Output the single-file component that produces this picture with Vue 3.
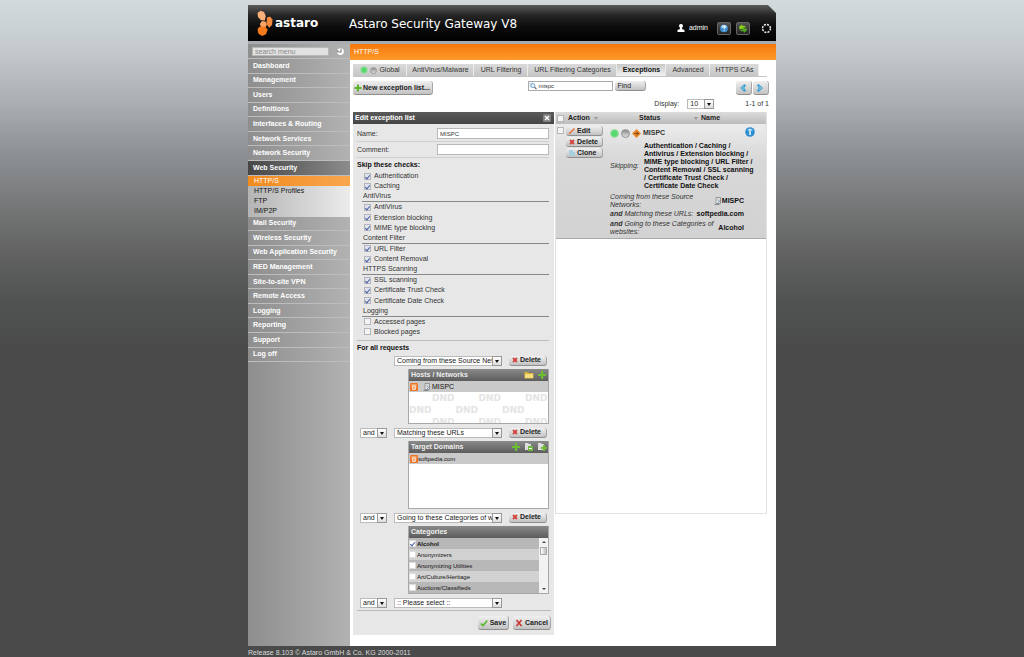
<script setup>
import { ref } from 'vue'

const menuTop = ['Dashboard', 'Management', 'Users', 'Definitions', 'Interfaces & Routing', 'Network Services', 'Network Security']
const subMenu = ['HTTP/S', 'HTTP/S Profiles', 'FTP', 'IM/P2P']
const menuBottom = ['Mail Security', 'Wireless Security', 'Web Application Security', 'RED Management', 'Site-to-site VPN', 'Remote Access', 'Logging', 'Reporting', 'Support', 'Log off']
const tabs = ['Global', 'AntiVirus/Malware', 'URL Filtering', 'URL Filtering Categories', 'Exceptions', 'Advanced', 'HTTPS CAs']
const skipped = ['Authentication / Caching /', 'Antivirus / Extension blocking /', 'MIME type blocking / URL Filter /', 'Content Removal / SSL scanning', '/ Certificate Trust Check /', 'Certificate Date Check']

const checks = ref([
  { label: 'Authentication', on: true },
  { label: 'Caching', on: true },
  { heading: 'AntiVirus' },
  { label: 'AntiVirus', on: true },
  { label: 'Extension blocking', on: true },
  { label: 'MIME type blocking', on: true },
  { heading: 'Content Filter' },
  { label: 'URL Filter', on: true },
  { label: 'Content Removal', on: true },
  { heading: 'HTTPS Scanning' },
  { label: 'SSL scanning', on: true },
  { label: 'Certificate Trust Check', on: true },
  { label: 'Certificate Date Check', on: true },
  { heading: 'Logging' },
  { label: 'Accessed pages', on: false },
  { label: 'Blocked pages', on: false },
])
const categories = ref([
  { label: 'Alcohol', on: true },
  { label: 'Anonymizers', on: false },
  { label: 'Anonymizing Utilities', on: false },
  { label: 'Art/Culture/Heritage', on: false },
  { label: 'Auctions/Classifieds', on: false },
])
const search = ref('mispc')
const name = ref('MISPC')
const comment = ref('')
</script>

<template>
  <div class="page">
    <div class="shell">
      <header class="top">
        <svg class="mark" viewBox="0 0 17 26" aria-hidden="true">
          <path d="M1.500 3 4.500.8 8 2l1.800 4-1 4.500L5 10.200 2 7z" fill="#fbb07a" />
          <path d="M11 7.500 14 6.500l2.500 3-.4 5.500-3 2.800-2.600-3.800z" fill="#f58a3c" />
          <path d="m6 11 4 .8.800 3.200-1.200 2.500-4.600-.5L3.800 14z" fill="#f9a465" />
          <path d="m3.500 16.800 5.500-.3 2.700 3-1.700 4.700L6 26l-3.700-2.500L1.500 19z" fill="#f57a1c" />
        </svg>
        <span class="brand">astaro</span>
        <h1>Astaro Security Gateway V8</h1>
        <div class="user">
          <svg class="person" viewBox="0 0 8 8" aria-hidden="true"><path d="M4 0a2 2 0 0 1 1.200 3.600L5 5l2.500 1v2h-7V6L3 5 2.800 3.600A2 2 0 0 1 4 0z" fill="#fff" /></svg>
          <span>admin</span>
        </div>
        <button class="tool" aria-label="Help">
          <svg viewBox="0 0 12 12"><circle cx="6" cy="6" r="4.200" fill="#3f8ed0" /><path d="M2.500 4.500a3.700 3.700 0 0 1 7 0L6 5.600z" fill="#a9d6f5" /><path d="M4.700 4.700a1.300 1.300 0 1 1 1.600 1.500V7M6.200 8v.9" fill="none" stroke="#fff" stroke-width="1" /></svg>
        </button>
        <button class="tool" aria-label="Reload">
          <svg viewBox="0 0 12 12"><path d="M1.500 4.500 4.500 1.500l1 1.500c2.500-.3 3.500.6 4 2-1.600-.6-2.300-.6-3 0L7.500 6.500l-5 .2z" fill="#8ad01c" /><path d="m10.500 7.500-3 3-1-1.400c-2.500.2-3.500-.6-4-2 1.600.6 2.600.6 3.200 0L5 5.800l4.700-.1z" fill="#4fa81a" /></svg>
        </button>
        <svg class="ring" viewBox="0 0 12 12" aria-hidden="true"><circle cx="6" cy="6" r="4.300" fill="none" stroke="#eee" stroke-width="1.600" stroke-dasharray="2.200 1.180" /></svg>
      </header>

      <div class="body">
        <aside class="side">
          <div class="menu-search">
            <input type="text" placeholder="search menu" aria-label="Search menu" />
            <button aria-label="Reset search"><svg viewBox="0 0 8 8"><circle cx="4" cy="4" r="3" fill="#fff" /><path d="M4.500 1.500v3H2M2 3l-1 1.500" fill="none" stroke="#777" stroke-width=".9" /></svg></button>
          </div>
          <nav class="menu">
            <a v-for="m in menuTop" :key="m" href="#">{{ m }}</a>
            <a href="#" class="open">Web Security</a>
            <div class="sub">
              <a v-for="(s, i) in subMenu" :key="s" href="#" :class="{ active: i === 0 }">{{ s }}</a>
            </div>
            <a v-for="m in menuBottom" :key="m" href="#">{{ m }}</a>
          </nav>
        </aside>

        <main class="main">
          <div class="crumb">HTTP/S</div>
          <div class="content">
            <nav class="tabs">
              <a v-for="(t, i) in tabs" :key="t" href="#" :class="['t' + i, { current: t === 'Exceptions' }]">
                <template v-if="i === 0"><i class="dot green"></i><i class="dot"></i></template>{{ t }}
              </a>
            </nav>

            <div class="toolbar">
              <button class="btn new"><svg class="ic" viewBox="0 0 8 8"><path d="M3 .5h2V3h2.500v2H5v2.500H3V5H.5V3H3z" fill="#5cb52a" /></svg>New exception list...</button>
              <div class="find">
                <div class="searchbox">
                  <svg class="ic" viewBox="0 0 8 8"><path d="M.5.500h4v5h-4z" fill="#cfe0ee" /><circle cx="4" cy="3.600" r="2" fill="#e4f1fb" stroke="#7aa0bf" stroke-width=".9" /><path d="m5.500 5.200 2 2" stroke="#666" stroke-width="1.200" /></svg>
                  <input v-model="search" type="text" aria-label="Search" />
                </div>
                <button class="btn findbtn">Find</button>
              </div>
              <div class="pager">
                <button class="btn" aria-label="Previous"><svg viewBox="0 0 10 10"><path d="M6.500 0 9 1.500 6.500 5 9 8.500 6.500 10 1.500 5z" fill="#3f9fd0" /><path d="M6 2.500 4 5l2 2.500" fill="none" stroke="#a8dcf2" /></svg></button>
                <button class="btn" aria-label="Next"><svg viewBox="0 0 10 10"><path d="M3.500 0 1 1.500 3.500 5 1 8.500 3.500 10l5-5z" fill="#3f9fd0" /><path d="m4 2.500 2 2.500-2 2.500" fill="none" stroke="#a8dcf2" /></svg></button>
              </div>
            </div>

            <div class="display">
              <label for="per">Display:</label>
              <div class="sel per"><select id="per"><option>10</option></select></div>
              <span class="count">1-1 of 1</span>
            </div>

            <div class="cols">
              <form class="edit" @submit.prevent>
                <div class="edit-head"><span>Edit exception list</span><button type="button" aria-label="Close"><svg viewBox="0 0 8 8"><rect width="8" height="8" rx="1" fill="#808080" /><path d="m2 2 4 4M6 2 2 6" stroke="#fff" stroke-width="1.300" /></svg></button></div>
                <div class="edit-body">
                  <div class="field"><label for="nm">Name:</label><input id="nm" v-model="name" type="text" /></div>
                  <div class="field"><label for="cm">Comment:</label><input id="cm" v-model="comment" type="text" /></div>
                  <h2>Skip these checks:</h2>
                  <div class="checks">
                    <template v-for="(c, i) in checks" :key="i">
                      <div v-if="c.heading" class="group">{{ c.heading }}</div>
                      <label v-else class="check"><input v-model="c.on" type="checkbox" />{{ c.label }}</label>
                    </template>
                  </div>
                  <h2 class="requests">For all requests</h2>

                  <div class="cond first">
                    <div class="sel wide"><select aria-label="Condition 1"><option>Coming from these Source Networks</option></select></div>
                    <button type="button" class="btn del"><svg class="ic" viewBox="0 0 8 8"><path d="m2 2 4 4m0-4L2 6" stroke="#d0443c" stroke-width="1.800" /></svg>Delete</button>
                  </div>
                  <section class="box hosts">
                    <h3>Hosts / Networks
                      <span class="acts">
                        <svg viewBox="0 0 10 10"><path d="M.5 2h3.500l1 1h4.500v5.500h-9z" fill="#d9b23c" /><path d="M1 4h8v4H1z" fill="#f5dc7c" /></svg>
                        <svg viewBox="0 0 10 10"><path d="M4 1h2.200v3H9v2H6.200v3H4V6H1V4h3z" fill="#6cc030" /></svg>
                      </span>
                    </h3>
                    <div class="item">
                      <svg class="trash" viewBox="0 0 8 8"><rect width="8" height="8" rx="1" fill="#ee7527" /><path d="M1.500 2h5M2.200 3l.4 3.500h2.800L5.800 3z" fill="#f6a878" stroke="#fff" stroke-width=".7" /></svg>
                      <svg class="host" viewBox="0 0 8 8"><path d="M2 .5h4.500v6H2z" fill="#f4f4f4" stroke="#777" stroke-width=".7" /><path d="M3 2h2.500M3 3.300h2.500" stroke="#789" stroke-width=".6" /><path d="m3.500 6 3-2.500" stroke="#6a7ab0" /><path d="M.5 7.500h5" stroke="#777" stroke-width=".8" /></svg>
                      MISPC
                    </div>
                    <div class="drop" aria-hidden="true">
                      <div><span>DND</span><span>DND</span><span>DND</span></div>
                      <div><span>DND</span><span>DND</span><span>DND</span></div>
                      <div><span>DND</span><span>DND</span><span>DND</span></div>
                    </div>
                  </section>

                  <div class="cond">
                    <div class="sel and"><select aria-label="Operator 2"><option>and</option></select></div>
                    <div class="sel wide"><select aria-label="Condition 2"><option>Matching these URLs</option></select></div>
                    <button type="button" class="btn del"><svg class="ic" viewBox="0 0 8 8"><path d="m2 2 4 4m0-4L2 6" stroke="#d0443c" stroke-width="1.800" /></svg>Delete</button>
                  </div>
                  <section class="box domains">
                    <h3>Target Domains
                      <span class="acts">
                        <svg viewBox="0 0 10 10"><path d="M4 1h2.200v3H9v2H6.200v3H4V6H1V4h3z" fill="#6cc030" /></svg>
                        <svg viewBox="0 0 10 10"><path d="M1 1h3l1 1h2v6H1z" fill="#ddd" /><path d="M4 4h5v5H4z" fill="#6cb83a" /><path d="M5 6.500h3" stroke="#fff" /></svg>
                        <svg viewBox="0 0 10 10"><path d="M1 1h3l1 1h2v6H1z" fill="#ddd" /><path d="M4 5h2V3h2v2h2v2H8v2H6V7H4z" fill="#6cc030" /></svg>
                      </span>
                    </h3>
                    <div class="item small">
                      <svg class="trash" viewBox="0 0 8 8"><rect width="8" height="8" rx="1" fill="#ee7527" /><path d="M1.500 2h5M2.200 3l.4 3.500h2.800L5.800 3z" fill="#f6a878" stroke="#fff" stroke-width=".7" /></svg>
                      softpedia.com
                    </div>
                  </section>

                  <div class="cond">
                    <div class="sel and"><select aria-label="Operator 3"><option>and</option></select></div>
                    <div class="sel wide"><select aria-label="Condition 3"><option>Going to these Categories of websites</option></select></div>
                    <button type="button" class="btn del"><svg class="ic" viewBox="0 0 8 8"><path d="m2 2 4 4m0-4L2 6" stroke="#d0443c" stroke-width="1.800" /></svg>Delete</button>
                  </div>
                  <section class="box cats">
                    <h3>Categories</h3>
                    <div class="cat-wrap">
                      <div class="cat-list">
                        <label v-for="c in categories" :key="c.label" :class="{ on: c.on }"><input v-model="c.on" type="checkbox" />{{ c.label }}</label>
                      </div>
                      <div class="scroll" aria-hidden="true"><i class="up"></i><b></b><i class="down"></i></div>
                    </div>
                  </section>

                  <div class="cond">
                    <div class="sel and"><select aria-label="Operator 4"><option>and</option></select></div>
                    <div class="sel wide"><select aria-label="Condition 4"><option>:: Please select ::</option></select></div>
                  </div>
                  <div class="submit">
                    <button class="btn"><svg class="ic" viewBox="0 0 8 8"><path d="m.8 4.500 2.200 2L7.300 1.500" fill="none" stroke="#5cb52a" stroke-width="1.600" /></svg>Save</button>
                    <button type="button" class="btn"><svg class="ic" viewBox="0 0 8 8"><path d="m1.500 1 5 6m0-6-5 6" stroke="#c8372f" stroke-width="1.600" /></svg>Cancel</button>
                  </div>
                </div>
              </form>

              <div class="results">
                <table>
                  <thead>
                    <tr>
                      <th class="c-box"><input type="checkbox" aria-label="Select all" /></th>
                      <th class="c-act">Action <i class="sort"></i></th>
                      <th class="c-status">Status <i class="sort left"></i></th>
                      <th>Name</th>
                    </tr>
                  </thead>
                  <tbody>
                    <tr>
                      <td><input type="checkbox" aria-label="Select MISPC" /></td>
                      <td class="c-btns">
                        <button class="btn"><svg class="ic" viewBox="0 0 8 8"><path d="M1 7 6.500 1.500" stroke="#e8764a" stroke-width="1.600" /></svg>Edit</button>
                        <button class="btn"><svg class="ic" viewBox="0 0 8 8"><path d="m2 2 4 4m0-4L2 6" stroke="#d0443c" stroke-width="1.800" /></svg>Delete</button>
                        <button class="btn"><svg class="ic" viewBox="0 0 8 8"><path d="M1 1h4v5H1zM3 3h4v4H3z" fill="#a9cfe3" /></svg>Clone</button>
                      </td>
                      <td colspan="2" class="c-detail">
                        <div class="title">
                          <i class="dot green"></i><i class="dot"></i>
                          <svg class="diamond" viewBox="0 0 10 10"><path d="m5 0 5 5-5 5-5-5z" fill="#e8862a" /><path d="M2.500 5h4.500M5.200 3.200 7 5 5.200 6.800" fill="none" stroke="#7a4010" stroke-width="1" /></svg>
                          <b>MISPC</b>
                          <svg class="info" viewBox="0 0 10 10"><circle cx="5" cy="5" r="4.800" fill="#2d8fd2" /><path d="M2 3a3.600 3.600 0 0 1 6 0L5 5z" fill="#8fc9ee" /><path d="M5 4.200v3.800M5 2v1.300" stroke="#fff" stroke-width="1.400" /></svg>
                        </div>
                        <dl>
                          <div class="pair skip"><dt>Skipping:</dt><dd><span v-for="s in skipped" :key="s">{{ s }}</span></dd></div>
                          <div class="pair"><dt>Coming from these Source<br />Networks:</dt><dd><svg class="host" viewBox="0 0 8 8"><path d="M2 .5h4.500v6H2z" fill="#f4f4f4" stroke="#777" stroke-width=".7" /><path d="M3 2h2.500M3 3.300h2.500" stroke="#789" stroke-width=".6" /><path d="m3.500 6 3-2.500" stroke="#6a7ab0" /><path d="M.5 7.500h5" stroke="#777" stroke-width=".8" /></svg>MISPC</dd></div>
                          <div class="pair one"><dt><b>and</b> Matching these URLs:</dt><dd>softpedia.com</dd></div>
                          <div class="pair"><dt><b>and</b> Going to these Categories of<br />websites:</dt><dd>Alcohol</dd></div>
                        </dl>
                      </td>
                    </tr>
                  </tbody>
                </table>
              </div>
            </div>
          </div>
        </main>
      </div>
      <footer>Release 8.103 © Astaro GmbH &amp; Co. KG 2000-2011</footer>
    </div>
  </div>
</template>

<style>
body {
  background: #4a4a4a;
}
</style>

<style scoped>
*, *::before, *::after {
  box-sizing: border-box;
}
.page {
  min-height: 100vh;
  display: flex;
  justify-content: center;
  padding-top: 5px;
  background: linear-gradient(#d3dadd 0, #c4cacc 50px, #acb0b3 100px, #8f9396 150px, #787a7b 200px, #626362 250px, #515353 300px, #4a4a4a 350px);
  font: 7px/10px "Liberation Sans", Arial, sans-serif;
  color: #333;
}
.shell {
  width: 100%;
  max-width: 528px;
  display: flex;
  flex-direction: column;
}
input, select, button {
  font: inherit;
  color: inherit;
  margin: 0;
  padding: 0;
  min-width: 0;
}
button {
  border: 0;
  background: none;
}
a {
  color: inherit;
  text-decoration: none;
}
svg {
  display: block;
  flex: none;
}
h1, h2, h3, dl, dd {
  margin: 0;
}
input[type="text"] {
  border: 1px solid #b8b8b8;
  background: #fff;
}
input[type="checkbox"] {
  appearance: none;
  flex: none;
  display: grid;
  place-items: center;
  width: 7px;
  height: 7px;
  border: 1px solid #b4b6ba;
  background: #f4f4f6;
}
input[type="checkbox"]:checked {
  background: #dfe2ef;
}
input[type="checkbox"]:checked::before {
  content: "";
  width: 3px;
  height: 5px;
  border: solid #4a5fa0;
  border-width: 0 1px 1px 0;
  transform: rotate(40deg);
}

.top {
  display: flex;
  align-items: center;
  height: 36px;
  padding: 0 4px 0 8px;
  background: linear-gradient(#5c5c5c, #262626 10px, #0c0c0c 22px, #000);
  color: #fff;
  clip-path: polygon(0 0, calc(100% - 8px) 0, 100% 8px, 100% 100%, 0 100%);
}
.mark {
  width: 17px;
  height: 26px;
}
.brand {
  width: 76px;
  padding-left: 2px;
  font: bold 12px/16px "DejaVu Sans", sans-serif;
}
h1 {
  flex: 1;
  padding-top: 2px;
  font: 12px/16px "DejaVu Sans", sans-serif;
}
.user {
  display: flex;
  align-items: center;
  gap: 4px;
  padding: 10px 9px 0 0;
}
.person {
  width: 8px;
  height: 8px;
}
.tool {
  width: 14px;
  height: 13px;
  margin: 10px 5px 0 0;
  border: 1px solid #666;
  border-radius: 2px;
  background: linear-gradient(#555, #222);
}
.tool svg {
  width: 12px;
  height: 11px;
}
.ring {
  width: 11px;
  height: 11px;
  margin: 10px 0 0 6px;
}

.body {
  flex: 1;
  display: flex;
  border-top: 3px solid #a8abb0;
}
.side {
  flex: none;
  width: 102px;
  background: linear-gradient(90deg, #8e8e8e, #b2b2b2);
}
.menu-search {
  display: flex;
  justify-content: space-between;
  height: 15px;
  padding: 3px 5px 2px 4px;
  border-bottom: 1px solid #bdbdbd;
}
.menu-search input {
  width: 77px;
  padding: 0 2px;
  background: #e2e2e2;
}
.menu-search input::placeholder {
  color: #8a8a8a;
  opacity: 1;
}
.menu-search svg {
  width: 9px;
  height: 9px;
}
.menu {
  display: flex;
  flex-direction: column;
  height: 303px;
  color: #fff;
  font-weight: bold;
}
.menu > a {
  flex: 1;
  display: flex;
  align-items: center;
  padding-left: 5px;
  border-bottom: 1px solid #bdbdbd;
}
.menu > .open {
  background: linear-gradient(90deg, #464646, #8c8c8c);
}
.sub {
  padding-bottom: 1px;
  background: linear-gradient(90deg, #b4b4b4, #ececec);
  color: #111;
  font-weight: normal;
}
.sub a {
  display: block;
  padding-left: 6px;
  line-height: 10px;
}
.sub .active {
  background: linear-gradient(90deg, #f08a1c, #f9a650);
  color: #fff;
}

.main {
  flex: 1;
  min-width: 0;
  background: #fff;
}
.crumb {
  padding: 0 4px;
  line-height: 16px;
  color: #fff;
  background: linear-gradient(#f5780c, #ff9a2a);
}
.content {
  padding: 4px 9px 11px 3px;
}
.tabs {
  display: flex;
  height: 13px;
  border-bottom: 1px solid #c4c4c4;
}
.tabs a {
  display: flex;
  align-items: center;
  justify-content: center;
  white-space: nowrap;
  background: linear-gradient(#dadada, #c6c6c6);
  box-shadow: inset -1px 0 #ececec;
}
.t0 { width: 54px; gap: 2px; }
.t1 { width: 67px; }
.t2 { width: 54px; }
.t3 { width: 89px; }
.t4 { width: 49px; }
.t5 { width: 44px; }
.t6 { width: 49px; }
.tabs .current {
  background: linear-gradient(#c8c8c8, #f2f2f2);
  font-weight: bold;
  color: #111;
}
.dot {
  flex: none;
  width: 7px;
  height: 7px;
  border: 1px solid #9a9a9a;
  border-radius: 50%;
  background: linear-gradient(#8a8a8a, #e0e0e0);
}
.dot.green {
  width: 8px;
  height: 8px;
  border-color: #a8dcae;
  background: radial-gradient(#4fd764, #6fdc80);
}
.btn {
  display: flex;
  align-items: center;
  border-radius: 3px;
  background: linear-gradient(#f0f0f0, #c2c2c2);
  border-bottom: 1px solid #8f8f8f;
  border-right: 1px solid #a5a5a5;
  font-weight: bold;
  color: #222;
  white-space: nowrap;
}
.ic {
  width: 8px;
  height: 8px;
}
.toolbar {
  display: flex;
  align-items: flex-start;
  justify-content: space-between;
  padding-top: 4px;
}
.new {
  height: 14px;
  padding: 0 2px 0 1px;
  gap: 1px;
}
.find {
  display: flex;
  gap: 2px;
  padding-left: 6px;
}
.searchbox {
  display: flex;
  align-items: center;
  width: 85px;
  height: 10px;
  border: 1px solid #aaa;
}
.searchbox input {
  flex: 1;
  border: 0;
  height: 8px;
  font-size: 6px;
  padding-left: 1px;
}
.findbtn {
  width: 31px;
  height: 10px;
  padding-left: 2px;
  font-weight: normal;
}
.pager {
  display: flex;
  gap: 1px;
  margin-right: -2px;
}
.pager .btn {
  width: 16px;
  height: 14px;
  justify-content: center;
}
.pager svg {
  width: 8px;
  height: 8px;
}
.display {
  display: flex;
  align-items: center;
  justify-content: flex-end;
  height: 17px;
  margin-right: -2px;
}
.sel {
  position: relative;
  flex: none;
  height: 10px;
}
.sel select {
  display: block;
  appearance: none;
  width: 100%;
  height: 100%;
  padding: 0 9px 0 2px;
  border: 1px solid #bbb;
  border-radius: 0;
  background: #fff;
  line-height: 8px;
  overflow: hidden;
  color: #222;
}
.sel::before, .sel::after {
  content: "";
  position: absolute;
  pointer-events: none;
}
.sel::before {
  top: 0;
  right: 0;
  width: 10px;
  height: 100%;
  border: 1px solid #999;
  background: linear-gradient(#fff, #ddd);
}
.sel::after {
  top: 4px;
  right: 3px;
  border: 2px solid transparent;
  border-top: 3px solid #111;
  border-bottom: 0;
}
.per {
  width: 27px;
  margin: 0 31px 0 8px;
}

.cols {
  display: flex;
  align-items: flex-start;
  gap: 1px;
}
.edit {
  flex: none;
  width: 201px;
  background: #e7e7e7;
}
.edit-head {
  display: flex;
  align-items: center;
  justify-content: space-between;
  height: 12px;
  padding: 0 3px 0 2px;
  background: linear-gradient(#5a5a5a, #454545);
  color: #fff;
  font-weight: bold;
}
.edit-head svg {
  width: 8px;
  height: 8px;
}
.edit-body {
  padding: 2px 5px 5px 4px;
}
.field {
  display: flex;
  align-items: center;
  justify-content: space-between;
  height: 16px;
  border-bottom: 1px solid #cfcfcf;
}
.field input {
  width: 112px;
  height: 11px;
  padding-left: 2px;
  font-size: 6px;
}
h2 {
  font-size: 7px;
  line-height: 13px;
  color: #111;
}
.checks {
  display: grid;
  grid-auto-rows: 1fr;
  height: 166px;
  padding-left: 5px;
}
.check {
  display: flex;
  align-items: center;
  gap: 3px;
  padding-left: 2px;
}
.group {
  padding-left: 1px;
  border-bottom: 1px solid #888;
}
.requests {
  margin-top: 3px;
  line-height: 12px;
  padding-top: 1px;
  border-top: 1px solid #bbb;
}
.cond {
  display: flex;
  align-items: center;
  gap: 7px;
  height: 13px;
  padding-left: 3px;
}
.first {
  padding-left: 37px;
}
.wide {
  width: 108px;
}
.and {
  width: 27px;
}
.del {
  width: 38px;
  height: 10px;
  padding-left: 2px;
  gap: 1px;
}
.box {
  width: 141px;
  margin: 2px 0 2px auto;
  border: 1px solid #a8a8a8;
  border-top: 0;
  background: #fff;
  overflow: hidden;
}
h3 {
  display: flex;
  justify-content: space-between;
  align-items: center;
  height: 12px;
  margin: 0 -1px;
  padding: 0 2px 0 3px;
  font-size: 7px;
  color: #eee;
  background: linear-gradient(#8a8a8a, #5c5c5c);
}
.acts {
  display: flex;
  gap: 3px;
}
.acts svg {
  width: 10px;
  height: 10px;
}
.item {
  display: flex;
  align-items: center;
  height: 11px;
  padding-left: 1px;
  background: #c9c9c9;
  color: #111;
}
.trash, .host {
  width: 8px;
  height: 8px;
}
.item .host {
  margin: 0 1px 0 5px;
}
.small {
  font-size: 6px;
}
.hosts {
  height: 55px;
}
.domains {
  height: 68px;
}
.drop {
  color: #e4e4e4;
  font: bold 9px/12px "DejaVu Sans", sans-serif;
}
.drop div {
  display: flex;
  gap: 24px;
  padding-left: 23px;
}
.drop div:nth-child(2) {
  padding-left: 0;
}
.cat-wrap {
  display: flex;
}
.cat-list {
  flex: 1;
  font-size: 6px;
  color: #111;
}
.cat-list label {
  display: flex;
  align-items: center;
  gap: 1px;
  height: 11px;
  background: #d2d2d2;
}
.cat-list label:nth-child(odd) {
  background: #b8b8b8;
}
.cat-list .on {
  font-weight: bold;
}
.cat-list input[type="checkbox"] {
  background: #fff;
  border-color: #ddd;
}
.scroll {
  display: flex;
  flex-direction: column;
  align-items: center;
  width: 9px;
  padding: 3px 0;
  background: #f2f2f2;
}
.scroll i {
  border: 2px solid transparent;
}
.scroll .up {
  border-top: 0;
  border-bottom-color: #444;
}
.scroll b {
  width: 7px;
  height: 8px;
  margin-top: 4px;
  border: 1px solid #aaa;
  background: linear-gradient(90deg, #fff, #bbb);
}
.scroll .down {
  margin-top: auto;
  border-bottom: 0;
  border-top-color: #444;
}
.cats {
  height: 68px;
}
.submit {
  display: flex;
  justify-content: flex-end;
  gap: 4px;
  padding-top: 5px;
  margin: 1px -2px 0 0;
  border-top: 1px solid #bbb;
}
.submit .btn {
  height: 14px;
  padding: 0 2px;
  gap: 2px;
}

.results {
  flex: 1;
  min-height: 402px;
  border: 1px solid #e2e2e2;
  border-top: 0;
}
table {
  width: 100%;
  border-collapse: collapse;
  table-layout: fixed;
}
th {
  height: 12px;
  padding: 0;
  text-align: left;
  color: #222;
  background: linear-gradient(#dcdcdc, #bcbcbc);
}
.c-box { width: 10px; }
.c-act { width: 44px; padding-left: 2px; }
.c-status { width: 91px; padding-left: 29px; }
td {
  padding: 2px 0;
  vertical-align: top;
}
th input, td input {
  margin: 1px;
}
tbody tr {
  background: linear-gradient(#ececec, #d8d8d8 30%, #d2d2d2);
  border-bottom: 1px solid #aaa;
}
.sort {
  display: inline-block;
  margin-left: 2px;
  border: 2px solid transparent;
  border-top: 3px solid #999;
  border-bottom: 0;
  vertical-align: middle;
}
.sort.left {
  margin-left: 32px;
}
.c-btns .btn {
  width: 37px;
  height: 10px;
  margin-bottom: 1px;
  padding-left: 2px;
  gap: 1px;
}
.title {
  display: flex;
  align-items: center;
  gap: 2px;
  height: 14px;
}
.title .dot {
  width: 9px;
  height: 9px;
}
.diamond {
  width: 9px;
  height: 9px;
}
.info {
  width: 10px;
  height: 10px;
  margin: 0 11px 2px auto;
}
dl {
  width: 134px;
  line-height: 8px;
}
.pair {
  display: flex;
  align-items: center;
  justify-content: space-between;
  height: 17px;
}
.pair.one {
  height: 10px;
}
dt {
  font-style: italic;
  white-space: nowrap;
}
dd {
  display: flex;
  align-items: center;
  font-weight: bold;
  color: #111;
}
.skip {
  height: auto;
  padding: 2px 0;
}
.skip dd {
  flex: none;
  width: 100px;
  flex-direction: column;
  align-items: flex-start;
  white-space: nowrap;
}

footer {
  line-height: 13px;
  height: 11px;
  color: #ddd;
}
</style>
